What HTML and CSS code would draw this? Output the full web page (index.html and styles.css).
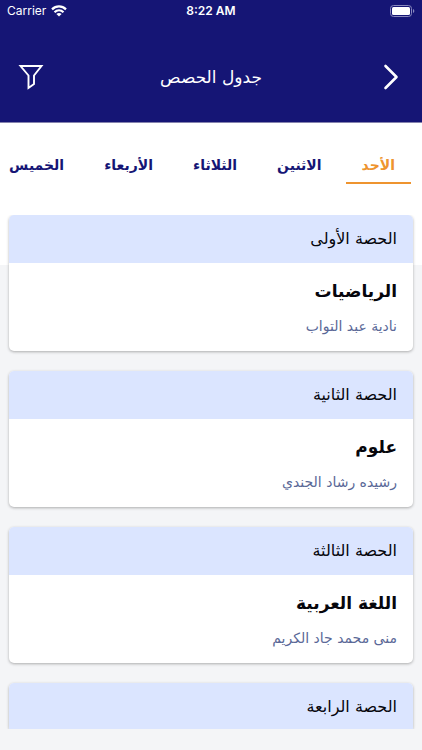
FILE: index.html
```html
<!DOCTYPE html>
<html lang="ar" dir="rtl">
<head>
<meta charset="utf-8">
<meta name="viewport" content="width=device-width, initial-scale=1">
<title>جدول الحصص</title>
<link rel="stylesheet" href="styles.css">
</head>
<body>
<div class="app">
  <header class="top">
    <div class="status" dir="ltr">
      <div class="status-side">
        <span>Carrier</span>
        <svg width="16" height="12" viewBox="0 0 16 12" fill="none" stroke="#fff" stroke-width="2.2" aria-hidden="true">
          <path d="M1 4.4C5 .4 11 .4 15 4.4"/>
          <path d="M3.5 7.2c2.6-2.5 6.4-2.5 9 0"/>
          <path d="M8 11.6 5.4 9c1.4-1.4 3.800-1.4 5.2 0z" fill="#fff" stroke="none"/>
        </svg>
      </div>
      <span class="clock">8:22 AM</span>
      <div class="status-side status-end">
        <svg width="25" height="12" viewBox="0 0 25 12" aria-hidden="true">
          <rect x=".5" y=".5" width="21" height="11" rx="3" fill="none" stroke="#8988bd"/>
          <rect x="2" y="2" width="18" height="8" rx="1.5" fill="#fff"/>
          <path d="M23 4c1.8.6 1.8 3.4 0 4z" fill="#8988bd"/>
        </svg>
      </div>
    </div>
    <div class="bar">
      <button class="icon-button" type="button" aria-label="رجوع">
        <svg width="26" height="26" viewBox="0 0 26 26" fill="none" stroke="#fff" stroke-width="2.6" stroke-linecap="round" stroke-linejoin="round" aria-hidden="true"><path d="M7.500 2l11 11-11 11"/></svg>
      </button>
      <h1>جدول الحصص</h1>
      <button class="icon-button" type="button" aria-label="تصفية">
        <svg width="26" height="26" viewBox="0 0 26 26" fill="none" stroke="#fff" stroke-width="1.9" stroke-linejoin="miter" aria-hidden="true"><path d="M2.500 2h21l-7.500 9.500v8.500l-5.500 4V11.500z"/></svg>
      </button>
    </div>
  </header>
  <nav class="tabs">
    <button class="tab active" type="button" aria-current="true">الأحد</button>
    <button class="tab" type="button">الاثنين</button>
    <button class="tab" type="button">الثلاثاء</button>
    <button class="tab" type="button">الأربعاء</button>
    <button class="tab" type="button">الخميس</button>
  </nav>
  <main class="list">
    <article class="card">
      <h2>الحصة الأولى</h2>
      <div class="card-body"><h3>الرياضيات</h3><p>نادية عبد التواب</p></div>
    </article>
    <article class="card">
      <h2>الحصة الثانية</h2>
      <div class="card-body"><h3>علوم</h3><p>رشيده رشاد الجندي</p></div>
    </article>
    <article class="card">
      <h2>الحصة الثالثة</h2>
      <div class="card-body"><h3>اللغة العربية</h3><p>منى محمد جاد الكريم</p></div>
    </article>
    <article class="card">
      <h2>الحصة الرابعة</h2>
    </article>
  </main>
</div>
</body>
</html>
```
FILE: styles.css
```css
* { box-sizing: border-box; }
body {
  margin: 0;
  background: #f4f5f7;
  color: #06060c;
  font-family: "DejaVu Sans", sans-serif;
}
h1, h2, h3, p { margin: 0; }
button {
  border: 0;
  padding: 0;
  background: none;
  color: inherit;
  font: inherit;
}
.app {
  display: flex;
  flex-direction: column;
  height: 100vh;
  padding-bottom: 21px;
  overflow: hidden;
  background: linear-gradient(#fff 265px, #f4f5f7 265px);
}
.top {
  flex: none;
  background: #151575;
  color: #fff;
  border-bottom: 1px solid #8583ae;
}
.status {
  display: flex;
  align-items: center;
  height: 22px;
  padding: 0 7px;
  font: 12px/22px Inter, sans-serif;
}
.status-side {
  display: flex;
  flex: 1;
  align-items: center;
  gap: 5px;
}
.status-end { justify-content: flex-end; }
.clock { font-weight: 600; }
.bar {
  display: flex;
  align-items: center;
  justify-content: space-between;
  height: 100px;
  padding: 10px 18px 0;
}
.bar h1 {
  font-size: 17px;
  line-height: 26px;
  font-weight: 400;
}
.icon-button {
  display: flex;
  width: 26px;
  height: 26px;
}
.tabs {
  display: flex;
  flex: none;
  gap: 8px;
  height: 92px;
  padding: 24px 0 0;
  margin: 0 11px 0 9px;
  overflow: hidden;
}
.tab {
  flex: none;
  height: 37px;
  padding: 0 16px;
  border-bottom: 2px solid transparent;
  color: #151575;
  font-size: 14px;
  font-weight: 700;
}
.tab.active {
  border-color: #ee942f;
  color: #ee942f;
}
.list {
  display: flex;
  flex: 1;
  flex-direction: column;
  gap: 20px;
  min-height: 0;
  padding: 0 9px;
  overflow: hidden;
}
.card {
  flex: none;
  border-radius: 5px;
  background: #fff;
  box-shadow: 0 1px 3px #0000004d;
}
.card h2 {
  padding: 0 16px;
  border-radius: 5px 5px 0 0;
  background: #dbe5ff;
  font-size: 16px;
  line-height: 48px;
  font-weight: 400;
}
.card-body {
  height: 88px;
  padding: 12px 16px 0;
}
.card h3 {
  font-size: 17px;
  line-height: 32px;
  font-weight: 700;
}
.card p {
  color: #5a6897;
  font-size: 14px;
  line-height: 38px;
}
```
